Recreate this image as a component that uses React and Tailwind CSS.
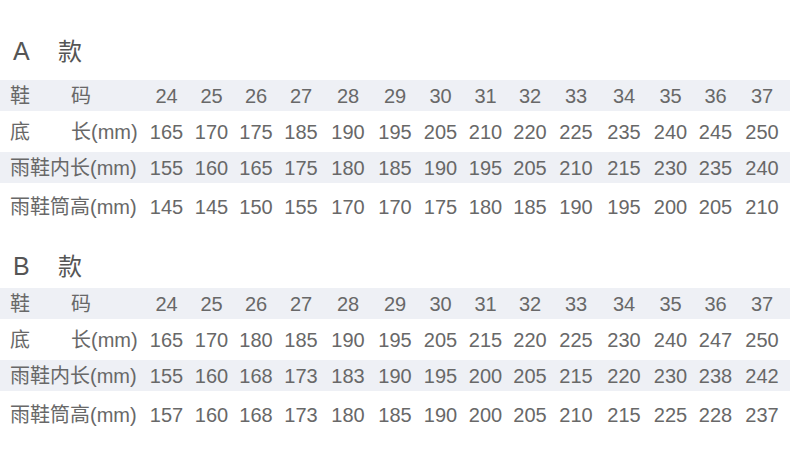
const sections = [
  {
    name: 'A',
    titleClass: 'mt-[34px] mb-[10px]',
    sizes: ['24', '25', '26', '27', '28', '29', '30', '31', '32', '33', '34', '35', '36', '37'],
    rows: [
      ['165', '170', '175', '185', '190', '195', '205', '210', '220', '225', '235', '240', '245', '250'],
      ['155', '160', '165', '175', '180', '185', '190', '195', '205', '210', '215', '230', '235', '240'],
      ['145', '145', '150', '155', '170', '170', '175', '180', '185', '190', '195', '200', '205', '210'],
    ],
  },
  {
    name: 'B',
    titleClass: 'mt-[18px] mb-[3px]',
    sizes: ['24', '25', '26', '27', '28', '29', '30', '31', '32', '33', '34', '35', '36', '37'],
    rows: [
      ['165', '170', '180', '185', '190', '195', '205', '215', '220', '225', '230', '240', '247', '250'],
      ['155', '160', '168', '173', '183', '190', '195', '200', '205', '215', '220', '230', '238', '242'],
      ['157', '160', '168', '173', '180', '185', '190', '200', '205', '210', '215', '225', '228', '237'],
    ],
  },
];

const grid =
  'grid grid-cols-[144px_45px_45px_44px_46px_48px_46px_45px_45px_44px_48px_48px_45px_45px_48px] items-center';

function Row({ label, values, className }) {
  return (
    <div className={`${grid} ${className}`}>
      <div className="flex items-center pl-[10px] whitespace-nowrap">{label}</div>
      {values.map((v, i) => (
        <div key={i} className="text-center">
          {v}
        </div>
      ))}
    </div>
  );
}

function SizeTable({ section }) {
  return (
    <div>
      <div className={`flex items-center h-[36px] pl-[13px] text-[25px] text-[#555] ${section.titleClass}`}>
        <span className="w-[45px]">{section.name}</span>
        <span className="text-[24px]">款</span>
      </div>
      <Row
        className="h-[31px] bg-[#eef0f5]"
        label={
          <>
            <span className="w-[61px]">鞋</span>
            <span>码</span>
          </>
        }
        values={section.sizes}
      />
      <Row
        className="h-[41px]"
        label={
          <>
            <span className="w-[61px]">底</span>
            <span>长(mm)</span>
          </>
        }
        values={section.rows[0]}
      />
      <Row className="h-[31px] bg-[#eef0f5]" label="雨鞋内长(mm)" values={section.rows[1]} />
      <Row className="h-[48px]" label="雨鞋筒高(mm)" values={section.rows[2]} />
    </div>
  );
}

export default function App() {
  return (
    <div
      className="w-[790px] h-[463px] bg-white text-[#686868] text-[20px] overflow-hidden"
      style={{ fontFamily: '"Liberation Sans", "Noto Sans CJK SC", sans-serif' }}
    >
      {sections.map((s) => (
        <SizeTable key={s.name} section={s} />
      ))}
    </div>
  );
}
